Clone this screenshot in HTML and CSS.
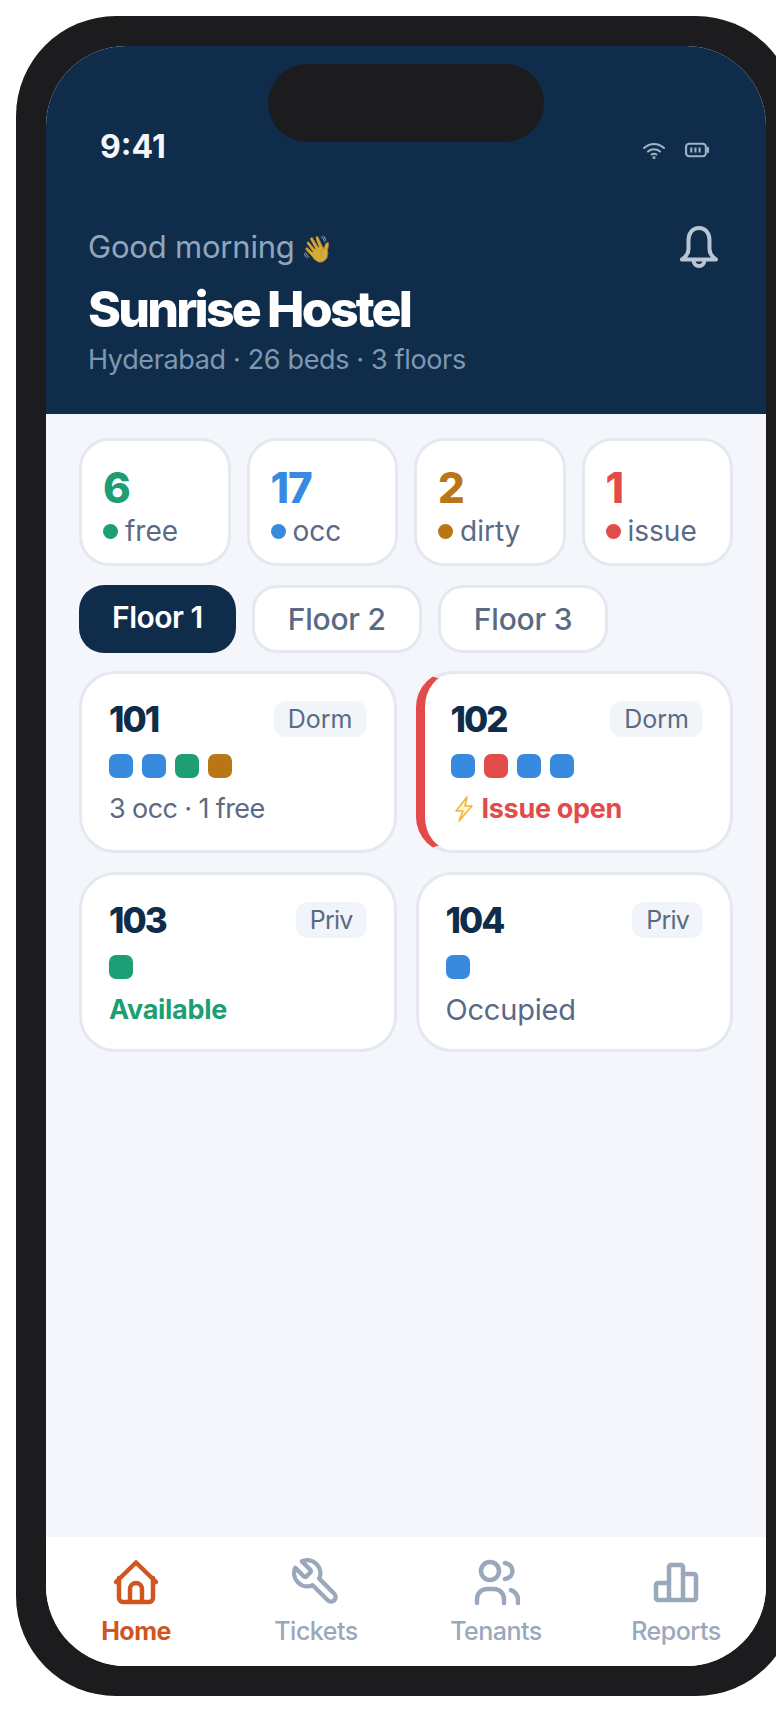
FILE: index.html
```html
<!DOCTYPE html>
<html lang="en">

<head>
    <meta charset="UTF-8">
    <meta name="viewport" content="width=device-width, initial-scale=1.0">
    <title>Sunrise Hostel</title>
    <link rel="stylesheet" href="styles.css">
</head>

<body>
    <div class="phone">
        <div class="screen">
            <div class="island"></div>

            <div class="header">
                <div class="status">
                    <span class="clock">9:41</span>
                    <div class="status-icons">
                        <svg class="wifi" viewBox="0 0 24 17" fill="none" stroke="#9fb3c8" stroke-width="2" stroke-linecap="round">
                            <path d="M2 6 C8 0.5 16 0.5 22 6" />
                            <path d="M6 9.5 C9.5 6.5 14.5 6.5 18 9.5" />
                            <path d="M9.5 12.5 C11 11.5 13 11.5 14.5 12.5" />
                            <circle cx="12" cy="15.5" r="0.6" />
                        </svg>
                        <svg class="battery" viewBox="0 0 23 15" fill="none" stroke="#9fb3c8" stroke-width="2">
                            <rect x="1" y="1.5" width="19" height="12" rx="3" />
                            <path d="M22 5.5 V9.5" stroke-linecap="round" />
                            <path d="M6 5 V10 M10 5 V10 M14 5 V10" />
                        </svg>
                    </div>
                </div>

                <div class="hello">
                    <div>
                        <p class="greeting">Good morning <span class="wave">👋</span></p>
                        <h1>Sunrise Hostel</h1>
                        <p class="place">Hyderabad · 26 beds · 3 floors</p>
                    </div>
                    <svg class="bell" viewBox="0 0 38 42" fill="none" stroke="#b9c5d2" stroke-width="4" stroke-linejoin="round" stroke-linecap="round">
                        <path d="M19 2 C12 2 8.5 8 8.5 14 V23 C8.5 28 5.5 31 2 33.5 H36 C32.5 31 29.5 28 29.5 23 V14 C29.5 8 26 2 19 2 Z" />
                        <path d="M13.5 34 C13.5 42 24.5 42 24.5 34" />
                    </svg>
                </div>
            </div>

            <div class="content">
                <div class="stats">
                    <div class="stat">
                        <div class="num green">6</div>
                        <div class="lbl"><i class="dot bg-green"></i>free</div>
                    </div>
                    <div class="stat">
                        <div class="num blue">17</div>
                        <div class="lbl"><i class="dot bg-blue"></i>occ</div>
                    </div>
                    <div class="stat">
                        <div class="num amber">2</div>
                        <div class="lbl"><i class="dot bg-amber"></i>dirty</div>
                    </div>
                    <div class="stat">
                        <div class="num red">1</div>
                        <div class="lbl"><i class="dot bg-red"></i>issue</div>
                    </div>
                </div>

                <div class="tabs">
                    <div class="tab active">Floor 1</div>
                    <div class="tab">Floor 2</div>
                    <div class="tab">Floor 3</div>
                </div>

                <div class="rooms">
                    <div class="room">
                        <div class="room-top">
                            <span class="room-no">101</span>
                            <span class="badge">Dorm</span>
                        </div>
                        <div class="beds">
                            <i class="bed bg-blue"></i><i class="bed bg-blue"></i><i class="bed bg-green"></i><i class="bed bg-amber"></i>
                        </div>
                        <p class="room-txt">3 occ · 1 free</p>
                    </div>
                    <div class="room problem">
                        <div class="room-top">
                            <span class="room-no">102</span>
                            <span class="badge">Dorm</span>
                        </div>
                        <div class="beds">
                            <i class="bed bg-blue"></i><i class="bed bg-red"></i><i class="bed bg-blue"></i><i class="bed bg-blue"></i>
                        </div>
                        <p class="room-txt red">
                            <svg class="bolt" viewBox="0 0 20 26" fill="#fff6d0" stroke="#f2b632" stroke-width="1.6" stroke-linejoin="round">
                                <path d="M13 1 L2 15 H9 L5 25 L18 10 H11 Z" />
                            </svg>
                            Issue open
                        </p>
                    </div>
                    <div class="room">
                        <div class="room-top">
                            <span class="room-no">103</span>
                            <span class="badge priv">Priv</span>
                        </div>
                        <div class="beds">
                            <i class="bed bg-green"></i>
                        </div>
                        <p class="room-txt green">Available</p>
                    </div>
                    <div class="room">
                        <div class="room-top">
                            <span class="room-no">104</span>
                            <span class="badge priv">Priv</span>
                        </div>
                        <div class="beds">
                            <i class="bed bg-blue"></i>
                        </div>
                        <p class="room-txt wide">Occupied</p>
                    </div>
                </div>
            </div>

            <div class="nav">
                <div class="nav-item on">
                    <svg viewBox="0 0 48 48">
                        <path d="M4 24 L24 4.500 L44 24" />
                        <path d="M7 20 V40 a4 4 0 0 0 4 4 H37 a4 4 0 0 0 4 -4 V20" />
                        <path d="M18 44 V31 a6 6 0 0 1 12 0 V44" />
                    </svg>
                    <span>Home</span>
                </div>
                <div class="nav-item">
                    <svg viewBox="1 1 22 22" class="wrench"><path d="M14.700 6.300a1 1 0 0 0 0 1.400l1.600 1.600a1 1 0 0 0 1.400 0l3.770-3.770a6 6 0 0 1-7.940 7.940l-6.910 6.910a2.120 2.120 0 0 1-3-3l6.910-6.910a6 6 0 0 1 7.940-7.940l-3.760 3.760z" /></svg>
                    <span>Tickets</span>
                </div>
                <div class="nav-item">
                    <svg viewBox="0 0 48 48">
                        <circle cx="18" cy="13" r="9" />
                        <path d="M33 5 C43 7 43 19 33 21" />
                        <path d="M5 45 V41 a10 10 0 0 1 10 -10 h7 a10 10 0 0 1 10 10 V45" />
                        <path d="M39 32 C43 34 46 38 46 42 V45" />
                    </svg>
                    <span>Tenants</span>
                </div>
                <div class="nav-item">
                    <svg viewBox="0 0 48 48">
                        <path d="M17 25 H6 a2 2 0 0 0 -2 2 V40 a2 2 0 0 0 2 2 H42 a2 2 0 0 0 2 -2 V18 a2 2 0 0 0 -2 -2 H31" />
                        <path d="M17 42 V9 a2 2 0 0 1 2 -2 h10 a2 2 0 0 1 2 2 V42" />
                    </svg>
                    <span>Reports</span>
                </div>
            </div>
        </div>
    </div>
</body>

</html>
```
FILE: styles.css
```css
html,
body {
    margin: 0;
    height: 100%;
    overflow: hidden;
    background-color: #fff;
}

body {
    padding: 16px;
    box-sizing: border-box;
    font-family: Inter, 'Noto Sans', sans-serif;
}

p,
h1 {
    margin: 0;
}

.phone {
    width: 780px;
    height: 1680px;
    box-sizing: border-box;
    padding: 30px;
    background-color: #1c1c1e;
    border-radius: 100px;
}

.screen {
    position: relative;
    display: flex;
    flex-direction: column;
    height: 100%;
    overflow: hidden;
    background-color: #f4f6fb;
    border-radius: 80px;
}

.island {
    position: absolute;
    top: 18px;
    left: 222px;
    width: 276px;
    height: 78px;
    background-color: #1c1c1e;
    border-radius: 39px;
}

.header {
    height: 368px;
    box-sizing: border-box;
    padding: 0 43px 0 42px;
    background-color: #0f2d4a;
}

.status {
    display: flex;
    align-items: center;
    justify-content: space-between;
    padding-top: 77px;
    padding-left: 12px;
    height: 46px;
}

.clock {
    color: #f4f6fb;
    font-size: 32px;
    font-weight: 700;
}

.status-icons {
    display: flex;
    gap: 19px;
    margin-right: 14px;
    margin-top: 8px;
}

.wifi {
    width: 24px;
    height: 17px;
}

.battery {
    width: 24px;
    height: 16px;
}

.hello {
    display: flex;
    justify-content: space-between;
    margin-top: 59px;
}

.greeting {
    color: #8fa6bd;
    font-size: 31px;
    letter-spacing: -0.2px;
}

.wave {
    margin-left: -2px;
    font-size: 26px;
    filter: saturate(0.8) brightness(0.85);
}

h1 {
    margin-top: 14px;
    color: #fff;
    font-size: 50px;
    font-weight: 800;
    letter-spacing: -2.8px;
}

.place {
    margin-top: 4px;
    color: #7f98b2;
    font-size: 27px;
    letter-spacing: -0.35px;
}

.bell {
    width: 38px;
    height: 42px;
    margin-top: -2px;
    margin-right: 5px;
}

.content {
    flex: 1;
    display: flex;
    flex-direction: column;
    gap: 19px;
    padding: 24px 33px;
}

.stats {
    display: grid;
    grid-template-columns: repeat(4, 1fr);
    gap: 16px;
}

.stat {
    height: 128px;
    box-sizing: border-box;
    padding: 22px 21px 0;
    background-color: #fff;
    border: 3px solid #e4e8f0;
    border-radius: 30px;
}

.num {
    font-size: 42px;
    font-weight: 800;
    line-height: 50px;
    letter-spacing: -1px;
}

.lbl {
    display: flex;
    align-items: center;
    gap: 7px;
    color: #5a6a85;
    font-size: 28px;
    line-height: 36px;
}

.dot {
    width: 15px;
    height: 15px;
    border-radius: 50%;
}

.green { color: #1d9e75; }
.blue { color: #378add; }
.amber { color: #ba7517; }
.red { color: #e24b4a; }
.bg-green { background-color: #1d9e75; }
.bg-blue { background-color: #378add; }
.bg-amber { background-color: #ba7517; }
.bg-red { background-color: #e24b4a; }

.tabs {
    display: flex;
    gap: 16px;
}

.tab {
    height: 68px;
    box-sizing: border-box;
    padding: 0 33px;
    display: flex;
    align-items: center;
    color: #5a6a85;
    font-size: 30px;
    font-weight: 500;
    letter-spacing: -0.2px;
    background-color: #fff;
    border: 3px solid #e4e8f0;
    border-radius: 25px;
}

.tab.active {
    padding: 0 33px 5px;
    color: #fff;
    font-weight: 600;
    letter-spacing: -0.5px;
    background-color: #0f2d4a;
    border: none;
}

.rooms {
    display: grid;
    grid-template-columns: 1fr 1fr;
    gap: 19px;
    margin-top: -1px;
}

.room {
    box-sizing: border-box;
    padding: 27px 27px 21px;
    background-color: #fff;
    border: 3px solid #e4e8f0;
    border-radius: 36px;
}

.room.problem {
    padding-left: 26px;
    padding-bottom: 23px;
    border-left: 9px solid #e24b4a;
}

.room-top {
    display: flex;
    align-items: center;
    justify-content: space-between;
}

.room-no {
    color: #0f2d4a;
    font-size: 35px;
    font-weight: 800;
    line-height: 36px;
    letter-spacing: -2px;
}

.badge {
    height: 36px;
    box-sizing: border-box;
    padding: 0 14px;
    color: #5a6a85;
    font-size: 25px;
    line-height: 36px;
    background-color: #f1f4f8;
    border-radius: 12px;
}

.badge.priv {
    letter-spacing: -0.8px;
}

.beds {
    display: flex;
    gap: 9px;
    margin-top: 17px;
}

.bed {
    width: 24px;
    height: 24px;
    border-radius: 7px;
}

.room-txt {
    margin-top: 13px;
    color: #5a6a85;
    font-size: 27px;
    line-height: 36px;
    letter-spacing: -0.6px;
}

.room-txt.wide {
    font-size: 29px;
    letter-spacing: -0.2px;
}

.room-txt.red,
.room-txt.green {
    font-weight: 700;
    letter-spacing: -0.3px;
}

.room-txt.red {
    display: flex;
    align-items: center;
    gap: 8px;
    color: #e24b4a;
}

.room-txt.green { color: #1d9e75; }

.bolt {
    width: 20px;
    height: 26px;
    margin-left: 3px;
}

.nav {
    height: 129px;
    box-sizing: border-box;
    display: grid;
    grid-template-columns: repeat(4, 1fr);
    padding-top: 21px;
    background-color: #fff;
}

.nav-item {
    display: flex;
    flex-direction: column;
    align-items: center;
    gap: 10px;
    color: #9aa8bc;
    font-size: 25px;
    font-weight: 500;
    letter-spacing: -0.5px;
}

.nav-item svg {
    width: 48px;
    height: 48px;
    fill: none;
    stroke: #9aa8bc;
    stroke-width: 4.5;
    stroke-linecap: round;
    stroke-linejoin: round;
}

.nav-item svg.wrench {
    stroke-width: 2;
    transform: scaleX(-1);
}

.nav-item.on {
    color: #d0561f;
    font-weight: 700;
}

.nav-item.on svg {
    stroke: #d0561f;
}
```
